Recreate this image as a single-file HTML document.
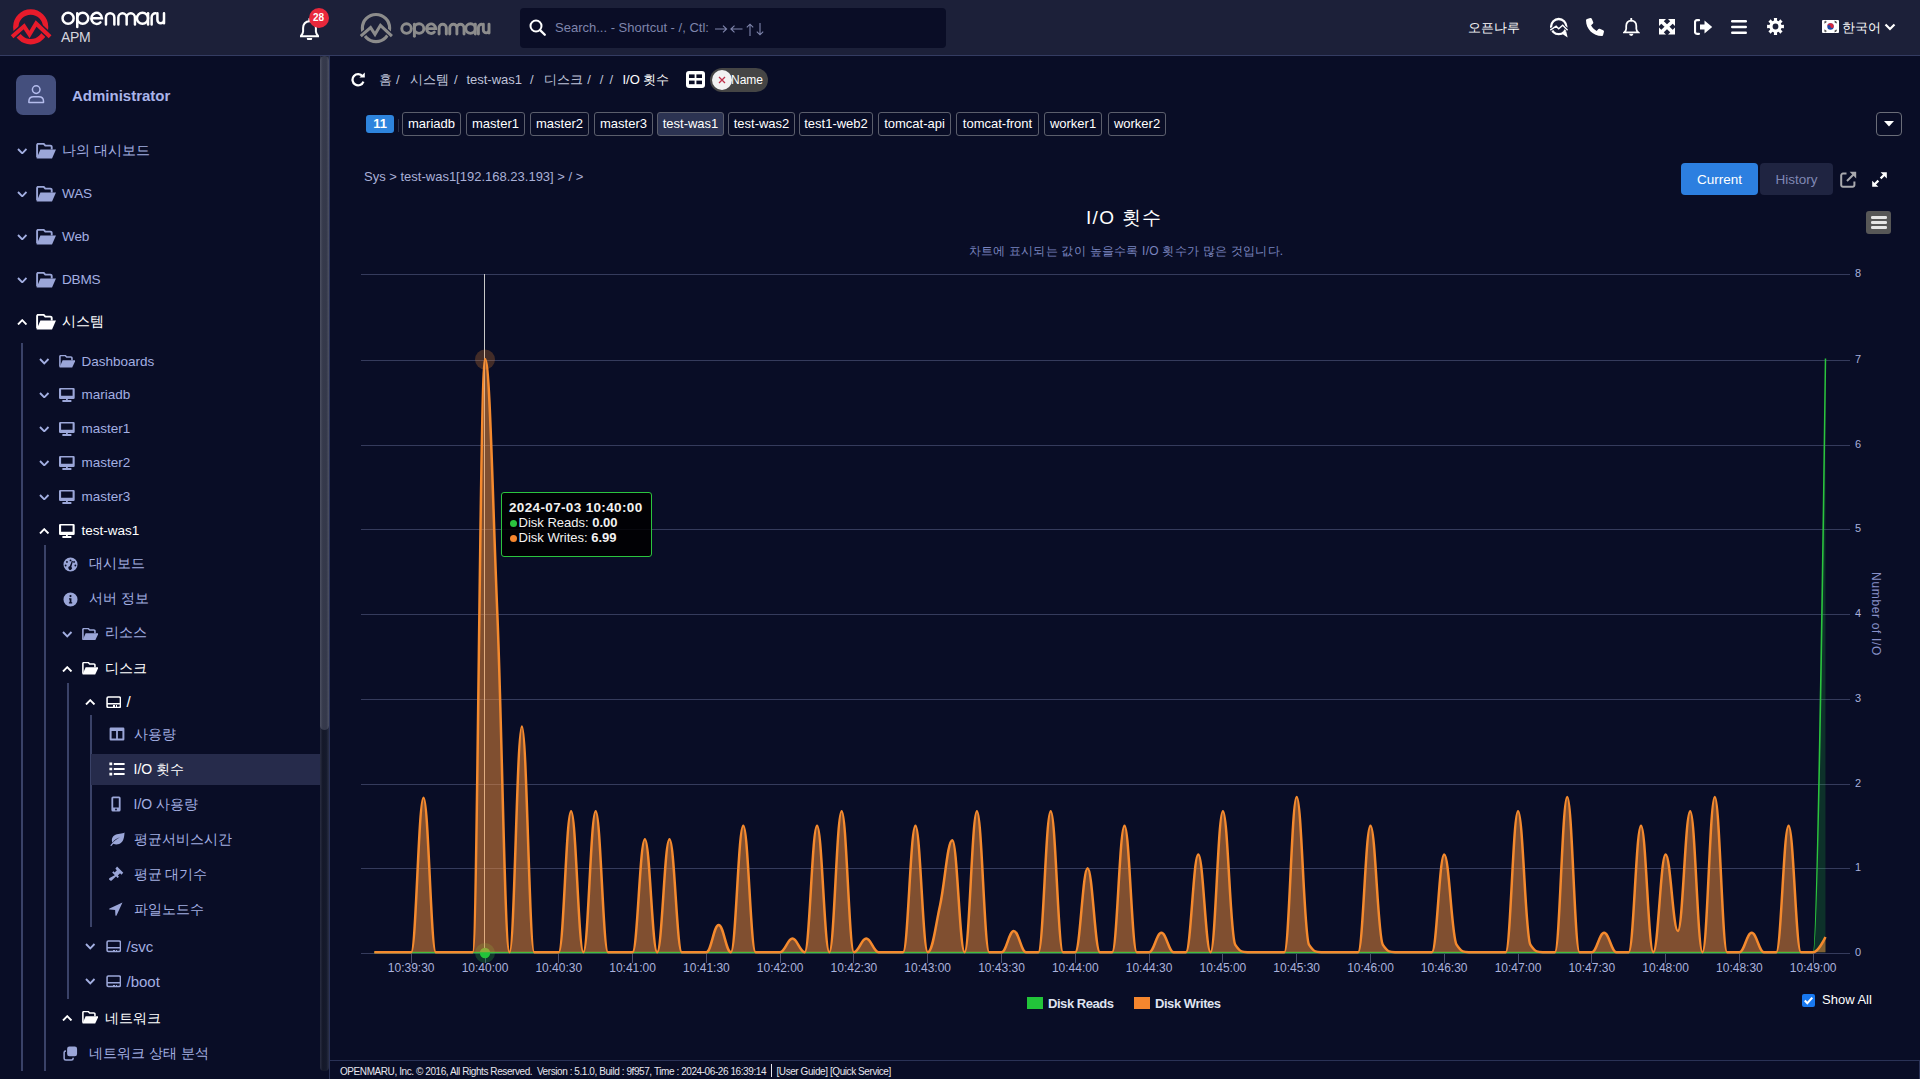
<!DOCTYPE html>
<html><head><meta charset="utf-8"><style>
*{box-sizing:border-box}
html,body{margin:0;padding:0;width:1920px;height:1079px;overflow:hidden;background:#090d26;font-family:"Liberation Sans",sans-serif}
.a{position:absolute;white-space:nowrap}
</style></head><body>
<div class="a" style="left:0;top:0;width:1920px;height:55px;background:#1c2039"></div>
<div class="a" style="left:0;top:55px;width:1920px;height:1px;background:#343c62"></div>
<svg class="chart" width="1920" height="1079" viewBox="0 0 1920 1079" style="position:absolute;left:0;top:0">
<g stroke="#353b5c" stroke-width="1"><line x1="361" x2="1850" y1="953.5" y2="953.5"/><line x1="361" x2="1850" y1="868.5" y2="868.5"/><line x1="361" x2="1850" y1="784.5" y2="784.5"/><line x1="361" x2="1850" y1="699.5" y2="699.5"/><line x1="361" x2="1850" y1="614.5" y2="614.5"/><line x1="361" x2="1850" y1="529.5" y2="529.5"/><line x1="361" x2="1850" y1="445.5" y2="445.5"/><line x1="361" x2="1850" y1="360.5" y2="360.5"/><line x1="361" x2="1850" y1="274.5" y2="274.5"/></g>
<g stroke="#4a5070" stroke-width="1"><line x1="411.5" x2="411.5" y1="954" y2="963"/><line x1="485.5" x2="485.5" y1="954" y2="963"/><line x1="558.5" x2="558.5" y1="954" y2="963"/><line x1="632.5" x2="632.5" y1="954" y2="963"/><line x1="706.5" x2="706.5" y1="954" y2="963"/><line x1="780.5" x2="780.5" y1="954" y2="963"/><line x1="853.5" x2="853.5" y1="954" y2="963"/><line x1="927.5" x2="927.5" y1="954" y2="963"/><line x1="1001.5" x2="1001.5" y1="954" y2="963"/><line x1="1075.5" x2="1075.5" y1="954" y2="963"/><line x1="1149.5" x2="1149.5" y1="954" y2="963"/><line x1="1222.5" x2="1222.5" y1="954" y2="963"/><line x1="1296.5" x2="1296.5" y1="954" y2="963"/><line x1="1370.5" x2="1370.5" y1="954" y2="963"/><line x1="1444.5" x2="1444.5" y1="954" y2="963"/><line x1="1518.5" x2="1518.5" y1="954" y2="963"/><line x1="1591.5" x2="1591.5" y1="954" y2="963"/><line x1="1665.5" x2="1665.5" y1="954" y2="963"/><line x1="1739.5" x2="1739.5" y1="954" y2="963"/><line x1="1813.5" x2="1813.5" y1="954" y2="963"/></g>
<g font-family="Liberation Sans" font-size="11" fill="#a8b0dc"><text x="1855" y="955.8">0</text><text x="1855" y="870.8">1</text><text x="1855" y="786.8">2</text><text x="1855" y="701.8">3</text><text x="1855" y="616.8">4</text><text x="1855" y="531.8">5</text><text x="1855" y="447.8">6</text><text x="1855" y="362.8">7</text><text x="1855" y="276.8">8</text></g>
<g font-family="Liberation Sans" font-size="12" fill="#aab2dc" text-anchor="middle"><text x="411.2" y="972">10:39:30</text><text x="485.0" y="972">10:40:00</text><text x="558.8" y="972">10:40:30</text><text x="632.6" y="972">10:41:00</text><text x="706.4" y="972">10:41:30</text><text x="780.2" y="972">10:42:00</text><text x="853.9" y="972">10:42:30</text><text x="927.7" y="972">10:43:00</text><text x="1001.5" y="972">10:43:30</text><text x="1075.3" y="972">10:44:00</text><text x="1149.1" y="972">10:44:30</text><text x="1222.9" y="972">10:45:00</text><text x="1296.7" y="972">10:45:30</text><text x="1370.5" y="972">10:46:00</text><text x="1444.2" y="972">10:46:30</text><text x="1518.0" y="972">10:47:00</text><text x="1591.8" y="972">10:47:30</text><text x="1665.6" y="972">10:48:00</text><text x="1739.4" y="972">10:48:30</text><text x="1813.2" y="972">10:49:00</text></g>
<text transform="translate(1872,614) rotate(90)" text-anchor="middle" font-family="Liberation Sans" font-size="12" letter-spacing="0.65" fill="#8890c8">Number of I/O</text>
<line x1="484.5" x2="484.5" y1="274" y2="953" stroke="#c8c8c8" stroke-width="1"/>
<path d="M374.32 952.60 C374.32 952.60 381.70 952.60 386.62 952.60 C391.54 952.60 393.99 952.60 398.91 952.60 C403.83 952.60 406.29 952.60 411.21 952.60 C416.13 952.60 418.59 952.60 423.51 952.60 C428.43 952.60 430.89 952.60 435.81 952.60 C440.73 952.60 443.19 952.60 448.11 952.60 C453.03 952.60 455.48 952.60 460.40 952.60 C465.32 952.60 467.78 952.60 472.70 952.60 C477.62 952.60 480.08 952.60 485.00 952.60 C489.92 952.60 492.38 952.60 497.30 952.60 C502.22 952.60 504.68 952.60 509.60 952.60 C514.52 952.60 516.97 952.60 521.89 952.60 C526.81 952.60 529.27 952.60 534.19 952.60 C539.11 952.60 541.57 952.60 546.49 952.60 C551.41 952.60 553.87 952.60 558.79 952.60 C563.71 952.60 566.17 952.60 571.09 952.60 C576.01 952.60 578.46 952.60 583.38 952.60 C588.30 952.60 590.76 952.60 595.68 952.60 C600.60 952.60 603.06 952.60 607.98 952.60 C612.90 952.60 615.36 952.60 620.28 952.60 C625.20 952.60 627.66 952.60 632.58 952.60 C637.50 952.60 639.95 952.60 644.87 952.60 C649.79 952.60 652.25 952.60 657.17 952.60 C662.09 952.60 664.55 952.60 669.47 952.60 C674.39 952.60 676.85 952.60 681.77 952.60 C686.69 952.60 689.15 952.60 694.07 952.60 C698.99 952.60 701.44 952.60 706.36 952.60 C711.28 952.60 713.74 952.60 718.66 952.60 C723.58 952.60 726.04 952.60 730.96 952.60 C735.88 952.60 738.34 952.60 743.26 952.60 C748.18 952.60 750.64 952.60 755.56 952.60 C760.48 952.60 762.93 952.60 767.85 952.60 C772.77 952.60 775.23 952.60 780.15 952.60 C785.07 952.60 787.53 952.60 792.45 952.60 C797.37 952.60 799.83 952.60 804.75 952.60 C809.67 952.60 812.13 952.60 817.05 952.60 C821.97 952.60 824.42 952.60 829.34 952.60 C834.26 952.60 836.72 952.60 841.64 952.60 C846.56 952.60 849.02 952.60 853.94 952.60 C858.86 952.60 861.32 952.60 866.24 952.60 C871.16 952.60 873.62 952.60 878.54 952.60 C883.46 952.60 885.91 952.60 890.83 952.60 C895.75 952.60 898.21 952.60 903.13 952.60 C908.05 952.60 910.51 952.60 915.43 952.60 C920.35 952.60 922.81 952.60 927.73 952.60 C932.65 952.60 935.11 952.60 940.03 952.60 C944.95 952.60 947.40 952.60 952.32 952.60 C957.24 952.60 959.70 952.60 964.62 952.60 C969.54 952.60 972.00 952.60 976.92 952.60 C981.84 952.60 984.30 952.60 989.22 952.60 C994.14 952.60 996.60 952.60 1001.52 952.60 C1006.44 952.60 1008.89 952.60 1013.81 952.60 C1018.73 952.60 1021.19 952.60 1026.11 952.60 C1031.03 952.60 1033.49 952.60 1038.41 952.60 C1043.33 952.60 1045.79 952.60 1050.71 952.60 C1055.63 952.60 1058.09 952.60 1063.01 952.60 C1067.93 952.60 1070.38 952.60 1075.30 952.60 C1080.22 952.60 1082.68 952.60 1087.60 952.60 C1092.52 952.60 1094.98 952.60 1099.90 952.60 C1104.82 952.60 1107.28 952.60 1112.20 952.60 C1117.12 952.60 1119.58 952.60 1124.50 952.60 C1129.42 952.60 1131.87 952.60 1136.79 952.60 C1141.71 952.60 1144.17 952.60 1149.09 952.60 C1154.01 952.60 1156.47 952.60 1161.39 952.60 C1166.31 952.60 1168.77 952.60 1173.69 952.60 C1178.61 952.60 1181.07 952.60 1185.99 952.60 C1190.91 952.60 1193.36 952.60 1198.28 952.60 C1203.20 952.60 1205.66 952.60 1210.58 952.60 C1215.50 952.60 1217.96 952.60 1222.88 952.60 C1227.80 952.60 1230.26 952.60 1235.18 952.60 C1240.10 952.60 1242.56 952.60 1247.48 952.60 C1252.40 952.60 1254.85 952.60 1259.77 952.60 C1264.69 952.60 1267.15 952.60 1272.07 952.60 C1276.99 952.60 1279.45 952.60 1284.37 952.60 C1289.29 952.60 1291.75 952.60 1296.67 952.60 C1301.59 952.60 1304.05 952.60 1308.97 952.60 C1313.89 952.60 1316.34 952.60 1321.26 952.60 C1326.18 952.60 1328.64 952.60 1333.56 952.60 C1338.48 952.60 1340.94 952.60 1345.86 952.60 C1350.78 952.60 1353.24 952.60 1358.16 952.60 C1363.08 952.60 1365.54 952.60 1370.46 952.60 C1375.38 952.60 1377.83 952.60 1382.75 952.60 C1387.67 952.60 1390.13 952.60 1395.05 952.60 C1399.97 952.60 1402.43 952.60 1407.35 952.60 C1412.27 952.60 1414.73 952.60 1419.65 952.60 C1424.57 952.60 1427.03 952.60 1431.95 952.60 C1436.87 952.60 1439.32 952.60 1444.24 952.60 C1449.16 952.60 1451.62 952.60 1456.54 952.60 C1461.46 952.60 1463.92 952.60 1468.84 952.60 C1473.76 952.60 1476.22 952.60 1481.14 952.60 C1486.06 952.60 1488.52 952.60 1493.44 952.60 C1498.36 952.60 1500.81 952.60 1505.73 952.60 C1510.65 952.60 1513.11 952.60 1518.03 952.60 C1522.95 952.60 1525.41 952.60 1530.33 952.60 C1535.25 952.60 1537.71 952.60 1542.63 952.60 C1547.55 952.60 1550.01 952.60 1554.93 952.60 C1559.85 952.60 1562.30 952.60 1567.22 952.60 C1572.14 952.60 1574.60 952.60 1579.52 952.60 C1584.44 952.60 1586.90 952.60 1591.82 952.60 C1596.74 952.60 1599.20 952.60 1604.12 952.60 C1609.04 952.60 1611.50 952.60 1616.42 952.60 C1621.34 952.60 1623.79 952.60 1628.71 952.60 C1633.63 952.60 1636.09 952.60 1641.01 952.60 C1645.93 952.60 1648.39 952.60 1653.31 952.60 C1658.23 952.60 1660.69 952.60 1665.61 952.60 C1670.53 952.60 1672.99 952.60 1677.91 952.60 C1682.83 952.60 1685.28 952.60 1690.20 952.60 C1695.12 952.60 1697.58 952.60 1702.50 952.60 C1707.42 952.60 1709.88 952.60 1714.80 952.60 C1719.72 952.60 1722.18 952.60 1727.10 952.60 C1732.02 952.60 1734.48 952.60 1739.40 952.60 C1744.32 952.60 1746.77 952.60 1751.69 952.60 C1756.61 952.60 1759.07 952.60 1763.99 952.60 C1768.91 952.60 1771.37 952.60 1776.29 952.60 C1781.21 952.60 1783.67 952.60 1788.59 952.60 C1793.51 952.60 1795.97 952.60 1800.89 952.60 C1805.81 952.60 1808.26 952.60 1813.18 952.60 C1818.10 952.60 1825.48 358.51 1825.48 358.51 L1825.48 952.60 L374.32 952.60 Z" fill="#1cc23a" fill-opacity="0.2"/>
<path d="M374.32 952.60 C374.32 952.60 381.70 952.60 386.62 952.60 C391.54 952.60 393.99 952.60 398.91 952.60 C403.83 952.60 406.29 952.60 411.21 952.60 C416.13 952.60 418.59 952.60 423.51 952.60 C428.43 952.60 430.89 952.60 435.81 952.60 C440.73 952.60 443.19 952.60 448.11 952.60 C453.03 952.60 455.48 952.60 460.40 952.60 C465.32 952.60 467.78 952.60 472.70 952.60 C477.62 952.60 480.08 952.60 485.00 952.60 C489.92 952.60 492.38 952.60 497.30 952.60 C502.22 952.60 504.68 952.60 509.60 952.60 C514.52 952.60 516.97 952.60 521.89 952.60 C526.81 952.60 529.27 952.60 534.19 952.60 C539.11 952.60 541.57 952.60 546.49 952.60 C551.41 952.60 553.87 952.60 558.79 952.60 C563.71 952.60 566.17 952.60 571.09 952.60 C576.01 952.60 578.46 952.60 583.38 952.60 C588.30 952.60 590.76 952.60 595.68 952.60 C600.60 952.60 603.06 952.60 607.98 952.60 C612.90 952.60 615.36 952.60 620.28 952.60 C625.20 952.60 627.66 952.60 632.58 952.60 C637.50 952.60 639.95 952.60 644.87 952.60 C649.79 952.60 652.25 952.60 657.17 952.60 C662.09 952.60 664.55 952.60 669.47 952.60 C674.39 952.60 676.85 952.60 681.77 952.60 C686.69 952.60 689.15 952.60 694.07 952.60 C698.99 952.60 701.44 952.60 706.36 952.60 C711.28 952.60 713.74 952.60 718.66 952.60 C723.58 952.60 726.04 952.60 730.96 952.60 C735.88 952.60 738.34 952.60 743.26 952.60 C748.18 952.60 750.64 952.60 755.56 952.60 C760.48 952.60 762.93 952.60 767.85 952.60 C772.77 952.60 775.23 952.60 780.15 952.60 C785.07 952.60 787.53 952.60 792.45 952.60 C797.37 952.60 799.83 952.60 804.75 952.60 C809.67 952.60 812.13 952.60 817.05 952.60 C821.97 952.60 824.42 952.60 829.34 952.60 C834.26 952.60 836.72 952.60 841.64 952.60 C846.56 952.60 849.02 952.60 853.94 952.60 C858.86 952.60 861.32 952.60 866.24 952.60 C871.16 952.60 873.62 952.60 878.54 952.60 C883.46 952.60 885.91 952.60 890.83 952.60 C895.75 952.60 898.21 952.60 903.13 952.60 C908.05 952.60 910.51 952.60 915.43 952.60 C920.35 952.60 922.81 952.60 927.73 952.60 C932.65 952.60 935.11 952.60 940.03 952.60 C944.95 952.60 947.40 952.60 952.32 952.60 C957.24 952.60 959.70 952.60 964.62 952.60 C969.54 952.60 972.00 952.60 976.92 952.60 C981.84 952.60 984.30 952.60 989.22 952.60 C994.14 952.60 996.60 952.60 1001.52 952.60 C1006.44 952.60 1008.89 952.60 1013.81 952.60 C1018.73 952.60 1021.19 952.60 1026.11 952.60 C1031.03 952.60 1033.49 952.60 1038.41 952.60 C1043.33 952.60 1045.79 952.60 1050.71 952.60 C1055.63 952.60 1058.09 952.60 1063.01 952.60 C1067.93 952.60 1070.38 952.60 1075.30 952.60 C1080.22 952.60 1082.68 952.60 1087.60 952.60 C1092.52 952.60 1094.98 952.60 1099.90 952.60 C1104.82 952.60 1107.28 952.60 1112.20 952.60 C1117.12 952.60 1119.58 952.60 1124.50 952.60 C1129.42 952.60 1131.87 952.60 1136.79 952.60 C1141.71 952.60 1144.17 952.60 1149.09 952.60 C1154.01 952.60 1156.47 952.60 1161.39 952.60 C1166.31 952.60 1168.77 952.60 1173.69 952.60 C1178.61 952.60 1181.07 952.60 1185.99 952.60 C1190.91 952.60 1193.36 952.60 1198.28 952.60 C1203.20 952.60 1205.66 952.60 1210.58 952.60 C1215.50 952.60 1217.96 952.60 1222.88 952.60 C1227.80 952.60 1230.26 952.60 1235.18 952.60 C1240.10 952.60 1242.56 952.60 1247.48 952.60 C1252.40 952.60 1254.85 952.60 1259.77 952.60 C1264.69 952.60 1267.15 952.60 1272.07 952.60 C1276.99 952.60 1279.45 952.60 1284.37 952.60 C1289.29 952.60 1291.75 952.60 1296.67 952.60 C1301.59 952.60 1304.05 952.60 1308.97 952.60 C1313.89 952.60 1316.34 952.60 1321.26 952.60 C1326.18 952.60 1328.64 952.60 1333.56 952.60 C1338.48 952.60 1340.94 952.60 1345.86 952.60 C1350.78 952.60 1353.24 952.60 1358.16 952.60 C1363.08 952.60 1365.54 952.60 1370.46 952.60 C1375.38 952.60 1377.83 952.60 1382.75 952.60 C1387.67 952.60 1390.13 952.60 1395.05 952.60 C1399.97 952.60 1402.43 952.60 1407.35 952.60 C1412.27 952.60 1414.73 952.60 1419.65 952.60 C1424.57 952.60 1427.03 952.60 1431.95 952.60 C1436.87 952.60 1439.32 952.60 1444.24 952.60 C1449.16 952.60 1451.62 952.60 1456.54 952.60 C1461.46 952.60 1463.92 952.60 1468.84 952.60 C1473.76 952.60 1476.22 952.60 1481.14 952.60 C1486.06 952.60 1488.52 952.60 1493.44 952.60 C1498.36 952.60 1500.81 952.60 1505.73 952.60 C1510.65 952.60 1513.11 952.60 1518.03 952.60 C1522.95 952.60 1525.41 952.60 1530.33 952.60 C1535.25 952.60 1537.71 952.60 1542.63 952.60 C1547.55 952.60 1550.01 952.60 1554.93 952.60 C1559.85 952.60 1562.30 952.60 1567.22 952.60 C1572.14 952.60 1574.60 952.60 1579.52 952.60 C1584.44 952.60 1586.90 952.60 1591.82 952.60 C1596.74 952.60 1599.20 952.60 1604.12 952.60 C1609.04 952.60 1611.50 952.60 1616.42 952.60 C1621.34 952.60 1623.79 952.60 1628.71 952.60 C1633.63 952.60 1636.09 952.60 1641.01 952.60 C1645.93 952.60 1648.39 952.60 1653.31 952.60 C1658.23 952.60 1660.69 952.60 1665.61 952.60 C1670.53 952.60 1672.99 952.60 1677.91 952.60 C1682.83 952.60 1685.28 952.60 1690.20 952.60 C1695.12 952.60 1697.58 952.60 1702.50 952.60 C1707.42 952.60 1709.88 952.60 1714.80 952.60 C1719.72 952.60 1722.18 952.60 1727.10 952.60 C1732.02 952.60 1734.48 952.60 1739.40 952.60 C1744.32 952.60 1746.77 952.60 1751.69 952.60 C1756.61 952.60 1759.07 952.60 1763.99 952.60 C1768.91 952.60 1771.37 952.60 1776.29 952.60 C1781.21 952.60 1783.67 952.60 1788.59 952.60 C1793.51 952.60 1795.97 952.60 1800.89 952.60 C1805.81 952.60 1808.26 952.60 1813.18 952.60 C1818.10 952.60 1825.48 358.51 1825.48 358.51" fill="none" stroke="#2bc43e" stroke-width="1.5"/>
<circle cx="485" cy="953" r="10" fill="#2bc43e" fill-opacity="0.25"/>
<circle cx="485" cy="953" r="5.2" fill="#22c43a"/>
<path d="M374.32 952.20 C374.32 952.20 381.70 952.20 386.62 952.20 C391.54 952.20 393.99 952.20 398.91 952.20 C403.83 952.20 406.29 952.20 411.21 952.20 C416.13 952.20 418.59 797.74 423.51 797.74 C428.43 797.74 430.89 952.20 435.81 952.20 C440.73 952.20 443.19 952.20 448.11 952.20 C453.03 952.20 455.48 952.20 460.40 952.20 C465.32 952.20 467.78 952.20 472.70 952.20 C477.62 952.20 480.08 358.96 485.00 358.96 C489.92 358.96 492.38 494.07 497.30 612.72 C502.22 731.37 504.68 952.20 509.60 952.20 C514.52 952.20 516.97 726.45 521.89 726.45 C526.81 726.45 529.27 952.20 534.19 952.20 C539.11 952.20 541.57 952.20 546.49 952.20 C551.41 952.20 553.87 952.20 558.79 952.20 C563.71 952.20 566.17 811.32 571.09 811.32 C576.01 811.32 578.46 952.20 583.38 952.20 C588.30 952.20 590.76 811.32 595.68 811.32 C600.60 811.32 603.06 952.20 607.98 952.20 C612.90 952.20 615.36 952.20 620.28 952.20 C625.20 952.20 627.66 952.20 632.58 952.20 C637.50 952.20 639.95 839.32 644.87 839.32 C649.79 839.32 652.25 952.20 657.17 952.20 C662.09 952.20 664.55 839.32 669.47 839.32 C674.39 839.32 676.85 952.20 681.77 952.20 C686.69 952.20 689.15 952.20 694.07 952.20 C698.99 952.20 701.44 952.20 706.36 952.20 C711.28 952.20 713.74 925.04 718.66 925.04 C723.58 925.04 726.04 952.20 730.96 952.20 C735.88 952.20 738.34 825.74 743.26 825.74 C748.18 825.74 750.64 952.20 755.56 952.20 C760.48 952.20 762.93 952.20 767.85 952.20 C772.77 952.20 775.23 952.20 780.15 952.20 C785.07 952.20 787.53 938.62 792.45 938.62 C797.37 938.62 799.83 952.20 804.75 952.20 C809.67 952.20 812.13 825.74 817.05 825.74 C821.97 825.74 824.42 952.20 829.34 952.20 C834.26 952.20 836.72 811.32 841.64 811.32 C846.56 811.32 849.02 952.20 853.94 952.20 C858.86 952.20 861.32 938.62 866.24 938.62 C871.16 938.62 873.62 952.20 878.54 952.20 C883.46 952.20 885.91 952.20 890.83 952.20 C895.75 952.20 898.21 952.20 903.13 952.20 C908.05 952.20 910.51 825.74 915.43 825.74 C920.35 825.74 922.81 952.20 927.73 952.20 C932.65 952.20 935.11 927.93 940.03 905.52 C944.95 883.12 947.40 840.17 952.32 840.17 C957.24 840.17 959.70 952.20 964.62 952.20 C969.54 952.20 972.00 811.32 976.92 811.32 C981.84 811.32 984.30 952.20 989.22 952.20 C994.14 952.20 996.60 952.20 1001.52 952.20 C1006.44 952.20 1008.89 930.98 1013.81 930.98 C1018.73 930.98 1021.19 952.20 1026.11 952.20 C1031.03 952.20 1033.49 952.20 1038.41 952.20 C1043.33 952.20 1045.79 811.32 1050.71 811.32 C1055.63 811.32 1058.09 952.20 1063.01 952.20 C1067.93 952.20 1070.38 952.20 1075.30 952.20 C1080.22 952.20 1082.68 868.18 1087.60 868.18 C1092.52 868.18 1094.98 952.20 1099.90 952.20 C1104.82 952.20 1107.28 952.20 1112.20 952.20 C1117.12 952.20 1119.58 825.74 1124.50 825.74 C1129.42 825.74 1131.87 952.20 1136.79 952.20 C1141.71 952.20 1144.17 952.20 1149.09 952.20 C1154.01 952.20 1156.47 932.68 1161.39 932.68 C1166.31 932.68 1168.77 952.20 1173.69 952.20 C1178.61 952.20 1181.07 952.20 1185.99 952.20 C1190.91 952.20 1193.36 854.60 1198.28 854.60 C1203.20 854.60 1205.66 952.20 1210.58 952.20 C1215.50 952.20 1217.96 811.32 1222.88 811.32 C1227.80 811.32 1230.26 936.92 1235.18 944.56 C1240.10 952.20 1242.56 952.20 1247.48 952.20 C1252.40 952.20 1254.85 952.20 1259.77 952.20 C1264.69 952.20 1267.15 952.20 1272.07 952.20 C1276.99 952.20 1279.45 952.20 1284.37 952.20 C1289.29 952.20 1291.75 796.89 1296.67 796.89 C1301.59 796.89 1304.05 936.92 1308.97 944.56 C1313.89 952.20 1316.34 952.20 1321.26 952.20 C1326.18 952.20 1328.64 952.20 1333.56 952.20 C1338.48 952.20 1340.94 952.20 1345.86 952.20 C1350.78 952.20 1353.24 952.20 1358.16 952.20 C1363.08 952.20 1365.54 825.74 1370.46 825.74 C1375.38 825.74 1377.83 936.92 1382.75 944.56 C1387.67 952.20 1390.13 952.20 1395.05 952.20 C1399.97 952.20 1402.43 952.20 1407.35 952.20 C1412.27 952.20 1414.73 952.20 1419.65 952.20 C1424.57 952.20 1427.03 952.20 1431.95 952.20 C1436.87 952.20 1439.32 854.60 1444.24 854.60 C1449.16 854.60 1451.62 936.92 1456.54 944.56 C1461.46 952.20 1463.92 952.20 1468.84 952.20 C1473.76 952.20 1476.22 952.20 1481.14 952.20 C1486.06 952.20 1488.52 952.20 1493.44 952.20 C1498.36 952.20 1500.81 952.20 1505.73 952.20 C1510.65 952.20 1513.11 811.32 1518.03 811.32 C1522.95 811.32 1525.41 936.92 1530.33 944.56 C1535.25 952.20 1537.71 952.20 1542.63 952.20 C1547.55 952.20 1550.01 952.20 1554.93 952.20 C1559.85 952.20 1562.30 796.89 1567.22 796.89 C1572.14 796.89 1574.60 952.20 1579.52 952.20 C1584.44 952.20 1586.90 952.20 1591.82 952.20 C1596.74 952.20 1599.20 932.68 1604.12 932.68 C1609.04 932.68 1611.50 952.20 1616.42 952.20 C1621.34 952.20 1623.79 952.20 1628.71 952.20 C1633.63 952.20 1636.09 825.74 1641.01 825.74 C1645.93 825.74 1648.39 952.20 1653.31 952.20 C1658.23 952.20 1660.69 854.60 1665.61 854.60 C1670.53 854.60 1672.99 930.98 1677.91 930.98 C1682.83 930.98 1685.28 811.32 1690.20 811.32 C1695.12 811.32 1697.58 952.20 1702.50 952.20 C1707.42 952.20 1709.88 796.89 1714.80 796.89 C1719.72 796.89 1722.18 952.20 1727.10 952.20 C1732.02 952.20 1734.48 952.20 1739.40 952.20 C1744.32 952.20 1746.77 932.68 1751.69 932.68 C1756.61 932.68 1759.07 952.20 1763.99 952.20 C1768.91 952.20 1771.37 952.20 1776.29 952.20 C1781.21 952.20 1783.67 825.74 1788.59 825.74 C1793.51 825.74 1795.97 952.20 1800.89 952.20 C1805.81 952.20 1808.26 952.20 1813.18 952.20 C1818.10 952.20 1825.48 936.92 1825.48 936.92 L1825.48 952.20 L374.32 952.20 Z" fill="#f7913a" fill-opacity="0.5"/>
<path d="M374.32 952.20 C374.32 952.20 381.70 952.20 386.62 952.20 C391.54 952.20 393.99 952.20 398.91 952.20 C403.83 952.20 406.29 952.20 411.21 952.20 C416.13 952.20 418.59 797.74 423.51 797.74 C428.43 797.74 430.89 952.20 435.81 952.20 C440.73 952.20 443.19 952.20 448.11 952.20 C453.03 952.20 455.48 952.20 460.40 952.20 C465.32 952.20 467.78 952.20 472.70 952.20 C477.62 952.20 480.08 358.96 485.00 358.96 C489.92 358.96 492.38 494.07 497.30 612.72 C502.22 731.37 504.68 952.20 509.60 952.20 C514.52 952.20 516.97 726.45 521.89 726.45 C526.81 726.45 529.27 952.20 534.19 952.20 C539.11 952.20 541.57 952.20 546.49 952.20 C551.41 952.20 553.87 952.20 558.79 952.20 C563.71 952.20 566.17 811.32 571.09 811.32 C576.01 811.32 578.46 952.20 583.38 952.20 C588.30 952.20 590.76 811.32 595.68 811.32 C600.60 811.32 603.06 952.20 607.98 952.20 C612.90 952.20 615.36 952.20 620.28 952.20 C625.20 952.20 627.66 952.20 632.58 952.20 C637.50 952.20 639.95 839.32 644.87 839.32 C649.79 839.32 652.25 952.20 657.17 952.20 C662.09 952.20 664.55 839.32 669.47 839.32 C674.39 839.32 676.85 952.20 681.77 952.20 C686.69 952.20 689.15 952.20 694.07 952.20 C698.99 952.20 701.44 952.20 706.36 952.20 C711.28 952.20 713.74 925.04 718.66 925.04 C723.58 925.04 726.04 952.20 730.96 952.20 C735.88 952.20 738.34 825.74 743.26 825.74 C748.18 825.74 750.64 952.20 755.56 952.20 C760.48 952.20 762.93 952.20 767.85 952.20 C772.77 952.20 775.23 952.20 780.15 952.20 C785.07 952.20 787.53 938.62 792.45 938.62 C797.37 938.62 799.83 952.20 804.75 952.20 C809.67 952.20 812.13 825.74 817.05 825.74 C821.97 825.74 824.42 952.20 829.34 952.20 C834.26 952.20 836.72 811.32 841.64 811.32 C846.56 811.32 849.02 952.20 853.94 952.20 C858.86 952.20 861.32 938.62 866.24 938.62 C871.16 938.62 873.62 952.20 878.54 952.20 C883.46 952.20 885.91 952.20 890.83 952.20 C895.75 952.20 898.21 952.20 903.13 952.20 C908.05 952.20 910.51 825.74 915.43 825.74 C920.35 825.74 922.81 952.20 927.73 952.20 C932.65 952.20 935.11 927.93 940.03 905.52 C944.95 883.12 947.40 840.17 952.32 840.17 C957.24 840.17 959.70 952.20 964.62 952.20 C969.54 952.20 972.00 811.32 976.92 811.32 C981.84 811.32 984.30 952.20 989.22 952.20 C994.14 952.20 996.60 952.20 1001.52 952.20 C1006.44 952.20 1008.89 930.98 1013.81 930.98 C1018.73 930.98 1021.19 952.20 1026.11 952.20 C1031.03 952.20 1033.49 952.20 1038.41 952.20 C1043.33 952.20 1045.79 811.32 1050.71 811.32 C1055.63 811.32 1058.09 952.20 1063.01 952.20 C1067.93 952.20 1070.38 952.20 1075.30 952.20 C1080.22 952.20 1082.68 868.18 1087.60 868.18 C1092.52 868.18 1094.98 952.20 1099.90 952.20 C1104.82 952.20 1107.28 952.20 1112.20 952.20 C1117.12 952.20 1119.58 825.74 1124.50 825.74 C1129.42 825.74 1131.87 952.20 1136.79 952.20 C1141.71 952.20 1144.17 952.20 1149.09 952.20 C1154.01 952.20 1156.47 932.68 1161.39 932.68 C1166.31 932.68 1168.77 952.20 1173.69 952.20 C1178.61 952.20 1181.07 952.20 1185.99 952.20 C1190.91 952.20 1193.36 854.60 1198.28 854.60 C1203.20 854.60 1205.66 952.20 1210.58 952.20 C1215.50 952.20 1217.96 811.32 1222.88 811.32 C1227.80 811.32 1230.26 936.92 1235.18 944.56 C1240.10 952.20 1242.56 952.20 1247.48 952.20 C1252.40 952.20 1254.85 952.20 1259.77 952.20 C1264.69 952.20 1267.15 952.20 1272.07 952.20 C1276.99 952.20 1279.45 952.20 1284.37 952.20 C1289.29 952.20 1291.75 796.89 1296.67 796.89 C1301.59 796.89 1304.05 936.92 1308.97 944.56 C1313.89 952.20 1316.34 952.20 1321.26 952.20 C1326.18 952.20 1328.64 952.20 1333.56 952.20 C1338.48 952.20 1340.94 952.20 1345.86 952.20 C1350.78 952.20 1353.24 952.20 1358.16 952.20 C1363.08 952.20 1365.54 825.74 1370.46 825.74 C1375.38 825.74 1377.83 936.92 1382.75 944.56 C1387.67 952.20 1390.13 952.20 1395.05 952.20 C1399.97 952.20 1402.43 952.20 1407.35 952.20 C1412.27 952.20 1414.73 952.20 1419.65 952.20 C1424.57 952.20 1427.03 952.20 1431.95 952.20 C1436.87 952.20 1439.32 854.60 1444.24 854.60 C1449.16 854.60 1451.62 936.92 1456.54 944.56 C1461.46 952.20 1463.92 952.20 1468.84 952.20 C1473.76 952.20 1476.22 952.20 1481.14 952.20 C1486.06 952.20 1488.52 952.20 1493.44 952.20 C1498.36 952.20 1500.81 952.20 1505.73 952.20 C1510.65 952.20 1513.11 811.32 1518.03 811.32 C1522.95 811.32 1525.41 936.92 1530.33 944.56 C1535.25 952.20 1537.71 952.20 1542.63 952.20 C1547.55 952.20 1550.01 952.20 1554.93 952.20 C1559.85 952.20 1562.30 796.89 1567.22 796.89 C1572.14 796.89 1574.60 952.20 1579.52 952.20 C1584.44 952.20 1586.90 952.20 1591.82 952.20 C1596.74 952.20 1599.20 932.68 1604.12 932.68 C1609.04 932.68 1611.50 952.20 1616.42 952.20 C1621.34 952.20 1623.79 952.20 1628.71 952.20 C1633.63 952.20 1636.09 825.74 1641.01 825.74 C1645.93 825.74 1648.39 952.20 1653.31 952.20 C1658.23 952.20 1660.69 854.60 1665.61 854.60 C1670.53 854.60 1672.99 930.98 1677.91 930.98 C1682.83 930.98 1685.28 811.32 1690.20 811.32 C1695.12 811.32 1697.58 952.20 1702.50 952.20 C1707.42 952.20 1709.88 796.89 1714.80 796.89 C1719.72 796.89 1722.18 952.20 1727.10 952.20 C1732.02 952.20 1734.48 952.20 1739.40 952.20 C1744.32 952.20 1746.77 932.68 1751.69 932.68 C1756.61 932.68 1759.07 952.20 1763.99 952.20 C1768.91 952.20 1771.37 952.20 1776.29 952.20 C1781.21 952.20 1783.67 825.74 1788.59 825.74 C1793.51 825.74 1795.97 952.20 1800.89 952.20 C1805.81 952.20 1808.26 952.20 1813.18 952.20 C1818.10 952.20 1825.48 936.92 1825.48 936.92" fill="none" stroke="#f58a2e" stroke-width="2.5" stroke-linejoin="round"/>
<circle cx="485" cy="359.5" r="10" fill="#f58a2e" fill-opacity="0.25"/>
</svg>
<svg class="a" style="left:0;top:0" width="60" height="55" viewBox="0 0 60 55"><g transform="translate(30.7,26.9)"><circle cx="0" cy="0" r="14.9" fill="none" stroke="#e81b2b" stroke-width="5.4"/>
<g transform="scale(1.0)"><path d="M-19.5 10.6 L-6.6 -0.6 L-1.2 7.6 L5.4 -3.4 L20 10.4" fill="none" stroke="#1c2039" stroke-width="7.0" stroke-linejoin="bevel"/>
<path d="M-18.6 9.8 L-6.6 -0.6 L-1.2 7.6 L5.4 -3.4 L19.4 9.8" fill="none" stroke="#e81b2b" stroke-width="4.0" stroke-linejoin="miter" stroke-miterlimit="2"/></g></g></svg>
<svg class="a" style="left:0;top:0" width="180" height="30" viewBox="0 0 180 30"><g transform="translate(61.2,11.9)"><g fill="none" stroke="#ffffff" stroke-width="2.5" stroke-linecap="round"><circle cx="6.9" cy="6.4" r="5.55"/><path d="M16.05 1.4 V15.2"/><circle cx="21.5" cy="6.4" r="5.55"/><path d="M30.15 6.4 H40.75 A5.3 5.55 0 1 0 39.2 10.4"/><path d="M44.75 12.6 V5.55 A4.2 4.2 0 0 1 53.15 5.55 V12.6"/><path d="M57.15 12.6 V5.55 A4.15 4.15 0 0 1 65.45 5.55 V12.6 M65.45 5.55 A4.15 4.15 0 0 1 73.75 5.55 V12.6"/><circle cx="81.3" cy="6.4" r="5.55"/><path d="M86.85 1.4 V12.6"/><path d="M90.45 12.6 V5.3 A3.9 3.9 0 0 1 94.4 1.4"/><path d="M96.2 1.4 V8.1 A3.3 3.3 0 0 0 102.8 8.1 V1.4 M102.8 8 V11.45"/></g></g></svg>
<div class="a" style="left:61px;top:28.5px;font-size:14px;line-height:16px;color:#d6d6de;letter-spacing:-0.3px">APM</div>
<svg class="a" style="left:299.5px;top:17.5px" width="19" height="22" viewBox="1.5 0 19 22">
<path d="M11 3.2 C6.8 3.2 4.6 6.4 4.6 10 V13.6 C4.6 15.4 3.4 17 2.2 18.3 H19.8 C18.6 17 17.4 15.4 17.4 13.6 V10 C17.4 6.4 15.2 3.2 11 3.2 Z" fill="none" stroke="#fff" stroke-width="2"/>
<path d="M11 1 V3" stroke="#fff" stroke-width="2.2" stroke-linecap="round"/>
<path d="M8.3 20 A2.7 2.7 0 0 0 13.7 20 Z" fill="#fff"/></svg>
<div class="a" style="left:308.5px;top:7.5px;width:20px;height:20px;border-radius:50%;background:#e8283c;color:#fff;font-size:10px;font-weight:bold;line-height:20px;text-align:center">28</div>
<svg class="a" style="left:350px;top:0" width="150" height="55" viewBox="0 0 150 55"><g transform="translate(26,28.1)"><circle cx="0" cy="0" r="13.6" fill="none" stroke="#8c8c8c" stroke-width="3.2"/>
<g transform="scale(0.82)"><path d="M-19.5 10.6 L-6.6 -0.6 L-1.2 7.6 L5.4 -3.4 L20 10.4" fill="none" stroke="#1c2039" stroke-width="6.658536585365853" stroke-linejoin="bevel"/>
<path d="M-18.6 9.8 L-6.6 -0.6 L-1.2 7.6 L5.4 -3.4 L19.4 9.8" fill="none" stroke="#8c8c8c" stroke-width="3.658536585365854" stroke-linejoin="miter" stroke-miterlimit="2"/></g></g><g transform="translate(50.6,23.1) scale(0.86)"><g fill="none" stroke="#8c8c8c" stroke-width="3.4" stroke-linecap="round"><circle cx="6.9" cy="6.4" r="5.55"/><path d="M16.05 1.4 V15.2"/><circle cx="21.5" cy="6.4" r="5.55"/><path d="M30.15 6.4 H40.75 A5.3 5.55 0 1 0 39.2 10.4"/><path d="M44.75 12.6 V5.55 A4.2 4.2 0 0 1 53.15 5.55 V12.6"/><path d="M57.15 12.6 V5.55 A4.15 4.15 0 0 1 65.45 5.55 V12.6 M65.45 5.55 A4.15 4.15 0 0 1 73.75 5.55 V12.6"/><circle cx="81.3" cy="6.4" r="5.55"/><path d="M86.85 1.4 V12.6"/><path d="M90.45 12.6 V5.3 A3.9 3.9 0 0 1 94.4 1.4"/><path d="M96.2 1.4 V8.1 A3.3 3.3 0 0 0 102.8 8.1 V1.4 M102.8 8 V11.45"/></g></g></svg>
<div class="a" style="left:520px;top:8px;width:426px;height:40px;border-radius:4px;background:#0a0d26"></div>
<svg class="a" style="left:528px;top:18px" width="20" height="20" viewBox="0 0 20 20"><circle cx="8" cy="8" r="5.5" fill="none" stroke="#fff" stroke-width="2"/><path d="M12.1 12.1 L16.8 16.8" stroke="#fff" stroke-width="2.3" stroke-linecap="round"/></svg>
<div class="a" style="left:555px;top:20px;font-size:13px;line-height:16px;color:#7f85ac">Search... - Shortcut - /, Ctl:</div>
<svg class="a" style="left:714px;top:22px" width="50" height="15" viewBox="0 0 50 15"><g fill="none" stroke="#7f85ac" stroke-width="1.1"><path d="M1 7 H12.5 M9 3.6 L12.6 7 L9 10.4"/><path d="M17 7 H28.5 M20.5 3.6 L16.9 7 L20.5 10.4"/><path d="M36 2.2 V14 M32.8 5.4 L36 2.2 L39.2 5.4"/><path d="M46 1 V12.8 M42.8 9.6 L46 12.8 L49.2 9.6"/></g></svg>
<div class="a" style="left:1468px;top:20px;font-size:13px;line-height:16px;color:#fff">오픈나루</div>
<svg class="a" style="left:1548px;top:16px" width="22" height="22" viewBox="0 0 22 22"><circle cx="10.7" cy="10.6" r="7.6" fill="none" stroke="#fff" stroke-width="2.3"/><path d="M13.4 17.2 L19.6 21.4 L18.2 15.2 Z" fill="#fff"/><path d="M1.8 14.6 L8.1 10.2 L10.7 12.8 L14.7 9.3 L20 14.4" fill="none" stroke="#1c2039" stroke-width="3"/><path d="M2.3 14.2 L8.1 10.2 L10.7 12.8 L14.7 9.3 L19.6 14.2" fill="none" stroke="#fff" stroke-width="1.4"/></svg>
<svg class="a" style="left:1586px;top:18px" width="18" height="18" viewBox="0 0 512 512"><path fill="#fff" d="M164.9 24.6c-7.7-18.6-28-28.5-47.4-23.2l-88 24C12.1 30.2 0 46 0 64C0 311.4 200.6 512 448 512c18 0 33.8-12.1 38.6-29.5l24-88c5.300-19.400-4.600-39.700-23.200-47.400l-96-40c-16.300-6.800-35.200-2.100-46.300 11.600L304.700 368C234.300 334.700 177.300 277.700 144 207.300L193.300 167c13.700-11.200 18.400-30 11.600-46.300l-40-96z"/></svg>
<svg class="a" style="left:1623px;top:17.5px" width="16.5" height="18.5" viewBox="0.75 0 16.5 19"><path d="M9 2.6 C5.6 2.6 3.8 5.2 3.8 8.2 V11 C3.8 12.6 2.9 13.8 1.8 14.8 H16.2 C15.1 13.8 14.2 12.6 14.2 11 V8.2 C14.2 5.2 12.4 2.6 9 2.6 Z" fill="none" stroke="#fff" stroke-width="1.8"/><path d="M9 0.8 V2.6" stroke="#fff" stroke-width="2" stroke-linecap="round"/><path d="M6.8 16.2 A2.2 2.2 0 0 0 11.2 16.2 Z" fill="#fff"/></svg>
<svg class="a" style="left:1659px;top:19px" width="16" height="15.5" viewBox="0 0 16 15.5"><g fill="#fff"><path d="M0 0 H7 L0 7 Z M16 0 H9 L16 7 Z M0 15.5 H7 L0 8.5 Z M16 15.5 H9 L16 8.5 Z"/></g><path d="M2 2 L14 13.5 M14 2 L2 13.5" stroke="#fff" stroke-width="3.6"/></svg>
<svg class="a" style="left:1694px;top:19px" width="19" height="16" viewBox="0 0 19 16"><path d="M5 1.2 H3 A2 2 0 0 0 1 3.2 V12.8 A2 2 0 0 0 3 14.8 H5" fill="none" stroke="#fff" stroke-width="2.2" stroke-linecap="round"/><path fill="#fff" d="M6 5.6 H10.5 V1.6 L18.2 8 L10.5 14.4 V10.4 H6 Z"/></svg>
<svg class="a" style="left:1731px;top:20px" width="16" height="14" viewBox="0 0 16 14"><rect x="0" y="0" width="16" height="2.4" rx="1.2" fill="#fff"/><rect x="0" y="5.8" width="16" height="2.4" rx="1.2" fill="#fff"/><rect x="0" y="11.6" width="16" height="2.4" rx="1.2" fill="#fff"/></svg>
<svg class="a" style="left:1767px;top:18px" width="17" height="17" viewBox="0 0 17 17"><path fill="#fff" fill-rule="evenodd" d="M16.94 6.86 L16.94 10.14 L14.53 9.95 L13.79 11.74 L15.63 13.31 L13.31 15.63 L11.74 13.79 L9.95 14.53 L10.14 16.94 L6.86 16.94 L7.05 14.53 L5.26 13.79 L3.69 15.63 L1.37 13.31 L3.21 11.74 L2.47 9.95 L0.06 10.14 L0.06 6.86 L2.47 7.05 L3.21 5.26 L1.37 3.69 L3.69 1.37 L5.26 3.21 L7.05 2.47 L6.86 0.06 L10.14 0.06 L9.95 2.47 L11.74 3.21 L13.31 1.37 L15.63 3.69 L13.79 5.26 L14.53 7.05 Z M8.5 5.6 A2.9 2.9 0 1 0 8.5 11.4 A2.9 2.9 0 1 0 8.5 5.6 Z"/></svg>
<svg class="a" style="left:1822px;top:20px" width="17" height="13" viewBox="0 0 17 13"><rect width="17" height="13" fill="#fff" rx="1"/><circle cx="8.5" cy="6.5" r="3.2" fill="#1f4aa8"/><path d="M5.3 6.5 A3.2 3.2 0 0 1 11.7 6.5 A1.6 1.6 0 0 1 8.5 6.5 A1.6 1.6 0 0 0 5.3 6.5Z" fill="#d8263a"/><g stroke="#222" stroke-width="0.8"><path d="M2 2.4 L4 1 M2.6 3.2 L4.6 1.8 M12.8 1 L15 2.6 M12.4 1.8 L14.4 3.2 M2 10.6 L4 12 M2.6 9.8 L4.6 11.2 M12.8 12 L15 10.4 M12.4 11.2 L14.4 9.8"/></g></svg>
<div class="a" style="left:1842px;top:20px;font-size:13px;line-height:16px;color:#fff">한국어</div>
<svg class="a" style="left:1884px;top:22px" width="12" height="10" viewBox="0 0 12 10"><path d="M1.5 2.5 L6 7 L10.5 2.5" fill="none" stroke="#fff" stroke-width="2.2"/></svg>
<div class="a" style="left:320px;top:56px;width:9px;height:1015px;border-radius:0 0 4px 4px;background:linear-gradient(90deg,#2a2e42 0%,#141829 30%,#151a2c 70%,#2a2f45 100%)"></div>
<div class="a" style="left:320px;top:56px;width:9px;height:674px;border-radius:4.5px;background:linear-gradient(90deg,#4d5162 0%,#363a4c 30%,#34384a 70%,#4d5163 100%)"></div>
<div class="a" style="left:329px;top:56px;width:1px;height:1023px;background:#2a3256"></div>
<div class="a" style="left:16px;top:75px;width:40px;height:40px;border-radius:7px;background:#444f7d"></div>
<svg class="a" style="left:26px;top:84px" width="20" height="22" viewBox="0 0 20 22"><circle cx="10.2" cy="5.6" r="3.8" fill="none" stroke="#b4bcec" stroke-width="1.5"/><path d="M2.9 18.6 V17.2 C2.9 14.4 5 12.8 7.6 12.8 H12.8 C15.4 12.8 17.5 14.4 17.5 17.2 V18.6 Z" fill="none" stroke="#b4bcec" stroke-width="1.5" stroke-linejoin="round"/></svg>
<div class="a" style="left:72px;top:85.5px;font-size:15px;line-height:20px;color:#a9b4ea;font-weight:bold;letter-spacing:0px">Administrator</div>
<div class="a" style="left:21px;top:343px;width:2px;height:728px;background:#3a4268"></div>
<div class="a" style="left:44px;top:545px;width:2px;height:526px;background:#3a4268"></div>
<div class="a" style="left:66.5px;top:683px;width:2px;height:316px;background:#3a4268"></div>
<div class="a" style="left:89.5px;top:715px;width:2px;height:212px;background:#3a4268"></div>
<div class="a" style="left:91px;top:754px;width:229px;height:31px;background:#262b4b"></div>
<svg class="a" style="left:16.5px;top:147.5px" width="10.5" height="6.5" viewBox="0 0 10.5 6.5"><path d="M1 1 L5.25 5.3 L9.5 1" fill="none" stroke="#a3afe2" stroke-width="1.9"/></svg>
<svg class="a" style="left:36px;top:143.0px" width="20" height="15.5" viewBox="0 0 20 15.5" preserveAspectRatio="none"><path d="M1.1 14.6 V2 A1.3 1.3 0 0 1 2.4 0.7 H7.5 L9.3 2.6 H14.4 A1.3 1.3 0 0 1 15.7 3.9 V6.6" fill="none" stroke="#9ba6d8" stroke-width="1.9" stroke-linejoin="round"/><path d="M4.4 6.6 H20 L16 15.4 H0.6 Z" fill="#9ba6d8"/></svg>
<div class="a" style="left:62px;top:140.8px;font-size:13.5px;line-height:20px;color:#a3afe2;font-weight:normal;letter-spacing:0px">나의 대시보드</div>
<svg class="a" style="left:16.5px;top:190.5px" width="10.5" height="6.5" viewBox="0 0 10.5 6.5"><path d="M1 1 L5.25 5.3 L9.5 1" fill="none" stroke="#a3afe2" stroke-width="1.9"/></svg>
<svg class="a" style="left:36px;top:186.0px" width="20" height="15.5" viewBox="0 0 20 15.5" preserveAspectRatio="none"><path d="M1.1 14.6 V2 A1.3 1.3 0 0 1 2.4 0.7 H7.5 L9.3 2.6 H14.4 A1.3 1.3 0 0 1 15.7 3.9 V6.6" fill="none" stroke="#9ba6d8" stroke-width="1.9" stroke-linejoin="round"/><path d="M4.4 6.6 H20 L16 15.4 H0.6 Z" fill="#9ba6d8"/></svg>
<div class="a" style="left:62px;top:183.8px;font-size:13.6px;line-height:20px;color:#a3afe2;font-weight:normal;letter-spacing:-0.2px">WAS</div>
<svg class="a" style="left:16.5px;top:233.5px" width="10.5" height="6.5" viewBox="0 0 10.5 6.5"><path d="M1 1 L5.25 5.3 L9.5 1" fill="none" stroke="#a3afe2" stroke-width="1.9"/></svg>
<svg class="a" style="left:36px;top:229.0px" width="20" height="15.5" viewBox="0 0 20 15.5" preserveAspectRatio="none"><path d="M1.1 14.6 V2 A1.3 1.3 0 0 1 2.4 0.7 H7.5 L9.3 2.6 H14.4 A1.3 1.3 0 0 1 15.7 3.9 V6.6" fill="none" stroke="#9ba6d8" stroke-width="1.9" stroke-linejoin="round"/><path d="M4.4 6.6 H20 L16 15.4 H0.6 Z" fill="#9ba6d8"/></svg>
<div class="a" style="left:62px;top:226.8px;font-size:13.6px;line-height:20px;color:#a3afe2;font-weight:normal;letter-spacing:-0.2px">Web</div>
<svg class="a" style="left:16.5px;top:276.5px" width="10.5" height="6.5" viewBox="0 0 10.5 6.5"><path d="M1 1 L5.25 5.3 L9.5 1" fill="none" stroke="#a3afe2" stroke-width="1.9"/></svg>
<svg class="a" style="left:36px;top:272.0px" width="20" height="15.5" viewBox="0 0 20 15.5" preserveAspectRatio="none"><path d="M1.1 14.6 V2 A1.3 1.3 0 0 1 2.4 0.7 H7.5 L9.3 2.6 H14.4 A1.3 1.3 0 0 1 15.7 3.9 V6.6" fill="none" stroke="#9ba6d8" stroke-width="1.9" stroke-linejoin="round"/><path d="M4.4 6.6 H20 L16 15.4 H0.6 Z" fill="#9ba6d8"/></svg>
<div class="a" style="left:62px;top:269.8px;font-size:13.6px;line-height:20px;color:#a3afe2;font-weight:normal;letter-spacing:-0.2px">DBMS</div>
<svg class="a" style="left:16.5px;top:318.7px" width="10.5" height="6.5" viewBox="0 0 10.5 6.5"><path d="M1 5.5 L5.25 1.2 L9.5 5.5" fill="none" stroke="#ffffff" stroke-width="1.9"/></svg>
<svg class="a" style="left:36px;top:314.2px" width="20" height="15.5" viewBox="0 0 20 15.5" preserveAspectRatio="none"><path d="M1.1 14.6 V2 A1.3 1.3 0 0 1 2.4 0.7 H7.5 L9.3 2.6 H14.4 A1.3 1.3 0 0 1 15.7 3.9 V6.6" fill="none" stroke="#ffffff" stroke-width="1.9" stroke-linejoin="round"/><path d="M4.4 6.6 H20 L16 15.4 H0.6 Z" fill="#ffffff"/></svg>
<div class="a" style="left:62px;top:312.0px;font-size:13.5px;line-height:20px;color:#ffffff;font-weight:normal;letter-spacing:0px">시스템</div>
<svg class="a" style="left:39.2px;top:358.2px" width="10.5" height="6.5" viewBox="0 0 10.5 6.5"><path d="M1 1 L5.25 5.3 L9.5 1" fill="none" stroke="#a3afe2" stroke-width="1.9"/></svg>
<svg class="a" style="left:58.8px;top:355.2px" width="16.5" height="12.5" viewBox="0 0 20 15.5" preserveAspectRatio="none"><path d="M1.1 14.6 V2 A1.3 1.3 0 0 1 2.4 0.7 H7.5 L9.3 2.6 H14.4 A1.3 1.3 0 0 1 15.7 3.9 V6.6" fill="none" stroke="#9ba6d8" stroke-width="1.9" stroke-linejoin="round"/><path d="M4.4 6.6 H20 L16 15.4 H0.6 Z" fill="#9ba6d8"/></svg>
<div class="a" style="left:81.5px;top:351.5px;font-size:13.5px;line-height:20px;color:#a3afe2;font-weight:normal;letter-spacing:0px">Dashboards</div>
<svg class="a" style="left:39.2px;top:391.9px" width="10.5" height="6.5" viewBox="0 0 10.5 6.5"><path d="M1 1 L5.25 5.3 L9.5 1" fill="none" stroke="#a3afe2" stroke-width="1.9"/></svg>
<svg class="a" style="left:59.3px;top:387.9px" width="15.7" height="14" viewBox="0 0 15.7 14" preserveAspectRatio="none"><path fill="#9ba6d8" d="M1.2 0 H14.5 A1.2 1.2 0 0 1 15.7 1.2 V9.7 A1.2 1.2 0 0 1 14.5 10.9 H1.2 A1.2 1.2 0 0 1 0 9.7 V1.2 A1.2 1.2 0 0 1 1.2 0 Z M2.1 1.5 V7.7 H13.6 V1.5 Z M7 10.8 H8.8 V12.2 H7Z M3.4 12.1 H12.4 V13.9 H3.4Z"/></svg>
<div class="a" style="left:81.5px;top:385.2px;font-size:13.5px;line-height:20px;color:#a3afe2;font-weight:normal;letter-spacing:0px">mariadb</div>
<svg class="a" style="left:39.2px;top:425.9px" width="10.5" height="6.5" viewBox="0 0 10.5 6.5"><path d="M1 1 L5.25 5.3 L9.5 1" fill="none" stroke="#a3afe2" stroke-width="1.9"/></svg>
<svg class="a" style="left:59.3px;top:421.9px" width="15.7" height="14" viewBox="0 0 15.7 14" preserveAspectRatio="none"><path fill="#9ba6d8" d="M1.2 0 H14.5 A1.2 1.2 0 0 1 15.7 1.2 V9.7 A1.2 1.2 0 0 1 14.5 10.9 H1.2 A1.2 1.2 0 0 1 0 9.7 V1.2 A1.2 1.2 0 0 1 1.2 0 Z M2.1 1.5 V7.7 H13.6 V1.5 Z M7 10.8 H8.8 V12.2 H7Z M3.4 12.1 H12.4 V13.9 H3.4Z"/></svg>
<div class="a" style="left:81.5px;top:419.2px;font-size:13.5px;line-height:20px;color:#a3afe2;font-weight:normal;letter-spacing:0px">master1</div>
<svg class="a" style="left:39.2px;top:459.9px" width="10.5" height="6.5" viewBox="0 0 10.5 6.5"><path d="M1 1 L5.25 5.3 L9.5 1" fill="none" stroke="#a3afe2" stroke-width="1.9"/></svg>
<svg class="a" style="left:59.3px;top:455.9px" width="15.7" height="14" viewBox="0 0 15.7 14" preserveAspectRatio="none"><path fill="#9ba6d8" d="M1.2 0 H14.5 A1.2 1.2 0 0 1 15.7 1.2 V9.7 A1.2 1.2 0 0 1 14.5 10.9 H1.2 A1.2 1.2 0 0 1 0 9.7 V1.2 A1.2 1.2 0 0 1 1.2 0 Z M2.1 1.5 V7.7 H13.6 V1.5 Z M7 10.8 H8.8 V12.2 H7Z M3.4 12.1 H12.4 V13.9 H3.4Z"/></svg>
<div class="a" style="left:81.5px;top:453.2px;font-size:13.5px;line-height:20px;color:#a3afe2;font-weight:normal;letter-spacing:0px">master2</div>
<svg class="a" style="left:39.2px;top:493.9px" width="10.5" height="6.5" viewBox="0 0 10.5 6.5"><path d="M1 1 L5.25 5.3 L9.5 1" fill="none" stroke="#a3afe2" stroke-width="1.9"/></svg>
<svg class="a" style="left:59.3px;top:489.9px" width="15.7" height="14" viewBox="0 0 15.7 14" preserveAspectRatio="none"><path fill="#9ba6d8" d="M1.2 0 H14.5 A1.2 1.2 0 0 1 15.7 1.2 V9.7 A1.2 1.2 0 0 1 14.5 10.9 H1.2 A1.2 1.2 0 0 1 0 9.7 V1.2 A1.2 1.2 0 0 1 1.2 0 Z M2.1 1.5 V7.7 H13.6 V1.5 Z M7 10.8 H8.8 V12.2 H7Z M3.4 12.1 H12.4 V13.9 H3.4Z"/></svg>
<div class="a" style="left:81.5px;top:487.2px;font-size:13.5px;line-height:20px;color:#a3afe2;font-weight:normal;letter-spacing:0px">master3</div>
<svg class="a" style="left:39.2px;top:527.9000000000001px" width="10.5" height="6.5" viewBox="0 0 10.5 6.5"><path d="M1 5.5 L5.25 1.2 L9.5 5.5" fill="none" stroke="#ffffff" stroke-width="1.9"/></svg>
<svg class="a" style="left:59.3px;top:523.9000000000001px" width="15.7" height="14" viewBox="0 0 15.7 14" preserveAspectRatio="none"><path fill="#ffffff" d="M1.2 0 H14.5 A1.2 1.2 0 0 1 15.7 1.2 V9.7 A1.2 1.2 0 0 1 14.5 10.9 H1.2 A1.2 1.2 0 0 1 0 9.7 V1.2 A1.2 1.2 0 0 1 1.2 0 Z M2.1 1.5 V7.7 H13.6 V1.5 Z M7 10.8 H8.8 V12.2 H7Z M3.4 12.1 H12.4 V13.9 H3.4Z"/></svg>
<div class="a" style="left:81.5px;top:521.2px;font-size:13.5px;line-height:20px;color:#ffffff;font-weight:normal;letter-spacing:0px">test-was1</div>
<svg class="a" style="left:63px;top:556.7px" width="15" height="15" viewBox="0 0 16 16" preserveAspectRatio="none"><path fill="#9ba6d8" d="M8 0.5 A7.5 7.5 0 1 0 8 15.5 A7.5 7.5 0 1 0 8 0.5 Z M8 2.6 A1 1 0 1 1 8 4.6 A1 1 0 1 1 8 2.6 Z M4.2 4.2 A1 1 0 1 1 4.2 6.2 A1 1 0 1 1 4.2 4.2Z M11.8 4.2 A1 1 0 1 1 11.8 6.2 A1 1 0 1 1 11.8 4.2Z M2.8 8 A1 1 0 1 1 2.8 10 A1 1 0 1 1 2.8 8Z M13.2 8 A1 1 0 1 1 13.2 10 A1 1 0 1 1 13.2 8Z M10.6 4.4 L8.9 10.3 A1.9 1.9 0 1 1 7.2 9.9 L9.5 4.1 Z"/></svg>
<div class="a" style="left:89px;top:552.5px;font-size:14px;line-height:20px;color:#a3afe2;font-weight:normal;letter-spacing:0px">대시보드</div>
<svg class="a" style="left:63px;top:591.5px" width="15" height="15" viewBox="0 0 16 16" preserveAspectRatio="none"><path fill="#9ba6d8" d="M8 0.5 A7.5 7.5 0 1 0 8 15.5 A7.5 7.5 0 1 0 8 0.5 Z M8 3.2 A1.15 1.15 0 1 1 8 5.5 A1.15 1.15 0 1 1 8 3.2 Z M6.4 6.6 H9 V10.9 H9.8 V12.3 H6.3 V10.9 H7.1 V8 H6.4 Z"/></svg>
<div class="a" style="left:89px;top:587.6px;font-size:14px;line-height:20px;color:#a3afe2;font-weight:normal;letter-spacing:0px">서버 정보</div>
<svg class="a" style="left:62px;top:631px" width="10.5" height="6.5" viewBox="0 0 10.5 6.5"><path d="M1 1 L5.25 5.3 L9.5 1" fill="none" stroke="#a3afe2" stroke-width="1.9"/></svg>
<svg class="a" style="left:81.5px;top:627.5px" width="16.5" height="12.5" viewBox="0 0 20 15.5" preserveAspectRatio="none"><path d="M1.1 14.6 V2 A1.3 1.3 0 0 1 2.4 0.7 H7.5 L9.3 2.6 H14.4 A1.3 1.3 0 0 1 15.7 3.9 V6.6" fill="none" stroke="#9ba6d8" stroke-width="1.9" stroke-linejoin="round"/><path d="M4.4 6.6 H20 L16 15.4 H0.6 Z" fill="#9ba6d8"/></svg>
<div class="a" style="left:104.5px;top:622.3px;font-size:14px;line-height:20px;color:#a3afe2;font-weight:normal;letter-spacing:0px">리소스</div>
<svg class="a" style="left:62px;top:665.5px" width="10.5" height="6.5" viewBox="0 0 10.5 6.5"><path d="M1 5.5 L5.25 1.2 L9.5 5.5" fill="none" stroke="#ffffff" stroke-width="1.9"/></svg>
<svg class="a" style="left:81.5px;top:662.3px" width="16.5" height="12.5" viewBox="0 0 20 15.5" preserveAspectRatio="none"><path d="M1.1 14.6 V2 A1.3 1.3 0 0 1 2.4 0.7 H7.5 L9.3 2.6 H14.4 A1.3 1.3 0 0 1 15.7 3.9 V6.6" fill="none" stroke="#ffffff" stroke-width="1.9" stroke-linejoin="round"/><path d="M4.4 6.6 H20 L16 15.4 H0.6 Z" fill="#ffffff"/></svg>
<div class="a" style="left:104.5px;top:657.5px;font-size:14px;line-height:20px;color:#ffffff;font-weight:normal;letter-spacing:0px">디스크</div>
<svg class="a" style="left:85px;top:698.8px" width="10.5" height="6.5" viewBox="0 0 10.5 6.5"><path d="M1 5.5 L5.25 1.2 L9.5 5.5" fill="none" stroke="#ffffff" stroke-width="1.9"/></svg>
<svg class="a" style="left:105.5px;top:695.5px" width="15.5" height="12.5" viewBox="0 0 16 13" preserveAspectRatio="none"><path fill="#ffffff" d="M2.4 0.3 H13.6 A2.1 2.1 0 0 1 15.7 2.4 V10.6 A2.1 2.1 0 0 1 13.6 12.7 H2.4 A2.1 2.1 0 0 1 0.3 10.6 V2.4 A2.1 2.1 0 0 1 2.4 0.3 Z M2.6 1.9 A0.7 0.7 0 0 0 1.9 2.6 V7.3 H14.1 V2.6 A0.7 0.7 0 0 0 13.4 1.9 Z M1.9 8.9 V10.4 A0.7 0.7 0 0 0 2.6 11.1 H13.4 A0.7 0.7 0 0 0 14.1 10.4 V8.9 Z"/></svg>
<div class="a" style="left:113px;top:705.2px;width:1.6px;height:1.4px;background:#fff"></div><div class="a" style="left:115.8px;top:705.2px;width:1.6px;height:1.4px;background:#fff"></div>
<div class="a" style="left:126.5px;top:692.0px;font-size:15px;line-height:20px;color:#ffffff;font-weight:normal;letter-spacing:0px">/</div>
<svg class="a" style="left:109px;top:726.6px" width="16" height="14" viewBox="0 0 16 14" preserveAspectRatio="none"><path fill="#9ba6d8" d="M1.8 0.6 H14.2 A1.2 1.2 0 0 1 15.4 1.8 V12.2 A1.2 1.2 0 0 1 14.2 13.4 H1.8 A1.2 1.2 0 0 1 0.6 12.2 V1.8 A1.2 1.2 0 0 1 1.8 0.6Z M2.6 4 V11.4 H7.1 V4Z M8.9 4 V11.4 H13.4 V4Z"/></svg>
<div class="a" style="left:133.5px;top:723.6px;font-size:14px;line-height:20px;color:#a3afe2;font-weight:normal;letter-spacing:0px">사용량</div>
<svg class="a" style="left:109px;top:762.0px" width="16" height="14" viewBox="0 0 16 14" preserveAspectRatio="none"><path fill="#ffffff" d="M0.4 0.6 H3.2 V3.2 H0.4Z M0.4 5.7 H3.2 V8.3 H0.4Z M0.4 10.8 H3.2 V13.4 H0.4Z M4.8 0.9 H15.6 V2.9 H4.8Z M4.8 6 H15.6 V8 H4.8Z M4.8 11.1 H15.6 V13.1 H4.8Z"/></svg>
<div class="a" style="left:133.5px;top:759.0px;font-size:14px;line-height:20px;color:#ffffff;font-weight:normal;letter-spacing:0px">I/O 횟수</div>
<svg class="a" style="left:111px;top:796.0px" width="10" height="16" viewBox="0 0 10 16" preserveAspectRatio="none"><path fill="#9ba6d8" d="M2 0.4 H8 A1.6 1.6 0 0 1 9.6 2 V14 A1.6 1.6 0 0 1 8 15.6 H2 A1.6 1.6 0 0 1 0.4 14 V2 A1.6 1.6 0 0 1 2 0.4Z M2.2 2.2 V11.6 H7.8 V2.2Z M5 12.6 A0.9 0.9 0 1 0 5 14.4 A0.9 0.9 0 1 0 5 12.6Z"/></svg>
<div class="a" style="left:133.5px;top:794.0px;font-size:14px;line-height:20px;color:#a3afe2;font-weight:normal;letter-spacing:0px">I/O 사용량</div>
<svg class="a" style="left:109px;top:831.6px" width="16" height="14" viewBox="0 0 16 14" preserveAspectRatio="none"><path fill="#9ba6d8" d="M15.6 0.4 C13.4 1.8 8.6 1 5.2 3.6 C2.4 5.8 2.6 8.8 3.4 10.4 C5.6 7.6 8.4 6 11.2 5.2 C8.2 6.6 4.6 9 1.2 13.6 L2.4 14 C3.4 12.8 4 12.2 4.4 11.8 C7 13 10.4 12.6 12.6 10.2 C15.4 7.2 15.2 3.2 15.6 0.4Z"/></svg>
<div class="a" style="left:133.5px;top:828.6px;font-size:14px;line-height:20px;color:#a3afe2;font-weight:normal;letter-spacing:0px">평균서비스시간</div>
<svg class="a" style="left:109px;top:866.1px" width="15" height="15" viewBox="0 0 16 16" preserveAspectRatio="none"><path fill="#9ba6d8" d="M8.6 0.6 L15.2 7.2 L13.2 9.2 L11.8 7.8 L9.4 10.2 L10.6 11.4 L9.2 12.8 L3.4 7 L4.8 5.6 L6 6.8 L8.4 4.4 L6.8 2.8Z M7 9.2 L8.2 10.4 L2.6 15.6 C2 16.2 0.8 15.2 0.2 14.4 C-0.2 14 0 13.4 0.6 12.8Z"/></svg>
<div class="a" style="left:133.5px;top:863.6px;font-size:14px;line-height:20px;color:#a3afe2;font-weight:normal;letter-spacing:0px">평균 대기수</div>
<svg class="a" style="left:109px;top:901.6px" width="14" height="14" viewBox="0 0 16 16" preserveAspectRatio="none"><path fill="#9ba6d8" d="M15.4 0.6 L8.6 15.4 C8.3 16 7.4 15.9 7.3 15.2 L7 9 L0.8 8.7 C0.1 8.6 0 7.7 0.6 7.4Z"/></svg>
<div class="a" style="left:133.5px;top:898.6px;font-size:14px;line-height:20px;color:#a3afe2;font-weight:normal;letter-spacing:0px">파일노드수</div>
<svg class="a" style="left:85px;top:943.2px" width="10.5" height="6.5" viewBox="0 0 10.5 6.5"><path d="M1 1 L5.25 5.3 L9.5 1" fill="none" stroke="#a3afe2" stroke-width="1.9"/></svg>
<svg class="a" style="left:105.5px;top:940.0px" width="15.5" height="12.5" viewBox="0 0 16 13" preserveAspectRatio="none"><path fill="#9ba6d8" d="M2.4 0.3 H13.6 A2.1 2.1 0 0 1 15.7 2.4 V10.6 A2.1 2.1 0 0 1 13.6 12.7 H2.4 A2.1 2.1 0 0 1 0.3 10.6 V2.4 A2.1 2.1 0 0 1 2.4 0.3 Z M2.6 1.9 A0.7 0.7 0 0 0 1.9 2.6 V7.3 H14.1 V2.6 A0.7 0.7 0 0 0 13.4 1.9 Z M1.9 8.9 V10.4 A0.7 0.7 0 0 0 2.6 11.1 H13.4 A0.7 0.7 0 0 0 14.1 10.4 V8.9 Z"/></svg>
<div class="a" style="left:113px;top:949.7px;width:1.6px;height:1.4px;background:#9ba6d8"></div><div class="a" style="left:115.8px;top:949.7px;width:1.6px;height:1.4px;background:#9ba6d8"></div>
<div class="a" style="left:126.5px;top:936.5px;font-size:15px;line-height:20px;color:#a3afe2;font-weight:normal;letter-spacing:0px">/svc</div>
<svg class="a" style="left:85px;top:978.2px" width="10.5" height="6.5" viewBox="0 0 10.5 6.5"><path d="M1 1 L5.25 5.3 L9.5 1" fill="none" stroke="#a3afe2" stroke-width="1.9"/></svg>
<svg class="a" style="left:105.5px;top:975.0px" width="15.5" height="12.5" viewBox="0 0 16 13" preserveAspectRatio="none"><path fill="#9ba6d8" d="M2.4 0.3 H13.6 A2.1 2.1 0 0 1 15.7 2.4 V10.6 A2.1 2.1 0 0 1 13.6 12.7 H2.4 A2.1 2.1 0 0 1 0.3 10.6 V2.4 A2.1 2.1 0 0 1 2.4 0.3 Z M2.6 1.9 A0.7 0.7 0 0 0 1.9 2.6 V7.3 H14.1 V2.6 A0.7 0.7 0 0 0 13.4 1.9 Z M1.9 8.9 V10.4 A0.7 0.7 0 0 0 2.6 11.1 H13.4 A0.7 0.7 0 0 0 14.1 10.4 V8.9 Z"/></svg>
<div class="a" style="left:113px;top:984.7px;width:1.6px;height:1.4px;background:#9ba6d8"></div><div class="a" style="left:115.8px;top:984.7px;width:1.6px;height:1.4px;background:#9ba6d8"></div>
<div class="a" style="left:126.5px;top:971.5px;font-size:15px;line-height:20px;color:#a3afe2;font-weight:normal;letter-spacing:0px">/boot</div>
<svg class="a" style="left:62px;top:1014.5px" width="10.5" height="6.5" viewBox="0 0 10.5 6.5"><path d="M1 5.5 L5.25 1.2 L9.5 5.5" fill="none" stroke="#ffffff" stroke-width="1.9"/></svg>
<svg class="a" style="left:81.5px;top:1011.3px" width="16.5" height="12.5" viewBox="0 0 20 15.5" preserveAspectRatio="none"><path d="M1.1 14.6 V2 A1.3 1.3 0 0 1 2.4 0.7 H7.5 L9.3 2.6 H14.4 A1.3 1.3 0 0 1 15.7 3.9 V6.6" fill="none" stroke="#ffffff" stroke-width="1.9" stroke-linejoin="round"/><path d="M4.4 6.6 H20 L16 15.4 H0.6 Z" fill="#ffffff"/></svg>
<div class="a" style="left:104.5px;top:1007.5px;font-size:14px;line-height:20px;color:#ffffff;font-weight:normal;letter-spacing:0px">네트워크</div>
<svg class="a" style="left:63px;top:1046px" width="15" height="15" viewBox="0 0 16 16" preserveAspectRatio="none"><path fill="#9ba6d8" d="M6.8 0.4 H12.6 A2.4 2.4 0 0 1 15 2.8 V8.4 A2.4 2.4 0 0 1 12.6 10.8 H6.8 A2.4 2.4 0 0 1 4.4 8.4 V2.8 A2.4 2.4 0 0 1 6.8 0.4 Z M3.2 4.4 V6 H3 A1 1 0 0 0 2 7 V13 A1 1 0 0 0 3 14 H9 A1 1 0 0 0 10 13 V12.4 H11.6 V13.2 A2.6 2.6 0 0 1 9 15.8 H3 A2.6 2.6 0 0 1 0.4 13.2 V7 A2.6 2.6 0 0 1 3 4.4 Z"/></svg>
<div class="a" style="left:89px;top:1042.6px;font-size:14px;line-height:20px;color:#a3afe2;font-weight:normal;letter-spacing:0px">네트워크 상태 분석</div>
<svg class="a" style="left:350px;top:72px" width="16" height="15" viewBox="0 0 16 15"><path d="M12.6 4.4 A5.6 5.6 0 1 0 13.4 9.6" fill="none" stroke="#fff" stroke-width="2.3"/><path d="M9.4 5.6 L14.8 5.6 L14.8 0.6 Z" fill="#fff"/></svg>
<div class="a" style="left:378.5px;top:70px;font-size:12.6px;line-height:20px;color:#bfc3d9;font-weight:normal;letter-spacing:0px;">홈</div>
<div class="a" style="left:396px;top:70px;font-size:13px;line-height:20px;color:#bfc3d9;font-weight:normal;letter-spacing:0px;">/</div>
<div class="a" style="left:409.6px;top:70px;font-size:12.6px;line-height:20px;color:#bfc3d9;font-weight:normal;letter-spacing:0px;">시스템</div>
<div class="a" style="left:453.9px;top:70px;font-size:13px;line-height:20px;color:#bfc3d9;font-weight:normal;letter-spacing:0px;">/</div>
<div class="a" style="left:466.4px;top:70px;font-size:13px;line-height:20px;color:#bfc3d9;font-weight:normal;letter-spacing:0px;">test-was1</div>
<div class="a" style="left:529.9px;top:70px;font-size:13px;line-height:20px;color:#bfc3d9;font-weight:normal;letter-spacing:0px;">/</div>
<div class="a" style="left:543.7px;top:70px;font-size:12.6px;line-height:20px;color:#bfc3d9;font-weight:normal;letter-spacing:0px;">디스크</div>
<div class="a" style="left:587.3px;top:70px;font-size:13px;line-height:20px;color:#bfc3d9;font-weight:normal;letter-spacing:0px;">/</div>
<div class="a" style="left:599.8px;top:70px;font-size:13px;line-height:20px;color:#bfc3d9;font-weight:normal;letter-spacing:0px;">/</div>
<div class="a" style="left:609.5px;top:70px;font-size:13px;line-height:20px;color:#bfc3d9;font-weight:normal;letter-spacing:0px;">/</div>
<div class="a" style="left:622.5px;top:70px;font-size:13px;line-height:20px;color:#ffffff;font-weight:normal;letter-spacing:0px;">I/O 횟수</div>
<svg class="a" style="left:686px;top:71px" width="19" height="17" viewBox="0 0 19 17"><rect x="0" y="0" width="19" height="17" rx="3" fill="#fff"/><rect x="3" y="3.4" width="5.6" height="3.6" fill="#0a0d26"/><rect x="10.4" y="3.4" width="5.6" height="3.6" fill="#0a0d26"/><rect x="3" y="9.6" width="5.6" height="3.6" fill="#0a0d26"/><rect x="10.4" y="9.6" width="5.6" height="3.6" fill="#0a0d26"/></svg>
<div class="a" style="left:710px;top:68px;width:58px;height:24px;border-radius:12px;background:#454545"></div>
<div class="a" style="left:731px;top:71px;font-size:12px;line-height:18px;color:#ffffff;font-weight:normal;letter-spacing:0px;">Name</div>
<div class="a" style="left:711.5px;top:70px;width:20px;height:20px;border-radius:50%;background:#f2f2f2"></div>
<svg class="a" style="left:716.5px;top:75px" width="10" height="10" viewBox="0 0 10 10"><path d="M2 2 L8 8 M8 2 L2 8" stroke="#c0304a" stroke-width="1.3"/></svg>
<div class="a" style="left:366px;top:115px;width:28px;height:18px;border-radius:3px;background:#2e84dd;color:#fff;font-weight:bold;font-size:13px;line-height:18px;text-align:center">11</div>
<div class="a" style="left:397.5px;top:119px;width:1px;height:13px;background:#2a2f48"></div>
<div class="a" style="left:402px;top:112px;width:59px;height:24px;border:1px solid #5b5e6c;border-radius:3px;background:transparent;color:#fff;font-size:13px;line-height:22px;text-align:center">mariadb</div>
<div class="a" style="left:466px;top:112px;width:59px;height:24px;border:1px solid #5b5e6c;border-radius:3px;background:transparent;color:#fff;font-size:13px;line-height:22px;text-align:center">master1</div>
<div class="a" style="left:530px;top:112px;width:59px;height:24px;border:1px solid #5b5e6c;border-radius:3px;background:transparent;color:#fff;font-size:13px;line-height:22px;text-align:center">master2</div>
<div class="a" style="left:594px;top:112px;width:59px;height:24px;border:1px solid #5b5e6c;border-radius:3px;background:transparent;color:#fff;font-size:13px;line-height:22px;text-align:center">master3</div>
<div class="a" style="left:657px;top:112px;width:67px;height:24px;border:1px solid #5b5e6c;border-radius:3px;background:#2c3352;color:#fff;font-size:13px;line-height:22px;text-align:center">test-was1</div>
<div class="a" style="left:728px;top:112px;width:67px;height:24px;border:1px solid #5b5e6c;border-radius:3px;background:transparent;color:#fff;font-size:13px;line-height:22px;text-align:center">test-was2</div>
<div class="a" style="left:799px;top:112px;width:74px;height:24px;border:1px solid #5b5e6c;border-radius:3px;background:transparent;color:#fff;font-size:13px;line-height:22px;text-align:center">test1-web2</div>
<div class="a" style="left:878px;top:112px;width:73px;height:24px;border:1px solid #5b5e6c;border-radius:3px;background:transparent;color:#fff;font-size:13px;line-height:22px;text-align:center">tomcat-api</div>
<div class="a" style="left:956px;top:112px;width:83px;height:24px;border:1px solid #5b5e6c;border-radius:3px;background:transparent;color:#fff;font-size:13px;line-height:22px;text-align:center">tomcat-front</div>
<div class="a" style="left:1044px;top:112px;width:58px;height:24px;border:1px solid #5b5e6c;border-radius:3px;background:transparent;color:#fff;font-size:13px;line-height:22px;text-align:center">worker1</div>
<div class="a" style="left:1108px;top:112px;width:58px;height:24px;border:1px solid #5b5e6c;border-radius:3px;background:transparent;color:#fff;font-size:13px;line-height:22px;text-align:center">worker2</div>
<div class="a" style="left:1876px;top:112px;width:26px;height:24px;border:1px solid #6a6d78;border-radius:4px"></div>
<svg class="a" style="left:1884px;top:121px" width="10" height="6" viewBox="0 0 10 6"><path d="M0 0 H10 L5 5.6 Z" fill="#fff"/></svg>
<div class="a" style="left:364px;top:168px;font-size:13px;line-height:18px;color:#a9b0d8;font-weight:normal;letter-spacing:0px;">Sys &gt; test-was1[192.168.23.193] &gt; / &gt;</div>
<div class="a" style="left:1681px;top:163px;width:77px;height:32px;border-radius:4px;background:#2c7fe0;color:#fff;font-size:13.5px;line-height:34px;text-align:center">Current</div>
<div class="a" style="left:1760px;top:163px;width:73px;height:32px;border-radius:4px;background:#1f2441;color:#8088b4;font-size:13.5px;line-height:34px;text-align:center">History</div>
<svg class="a" style="left:1840px;top:171px" width="17" height="17" viewBox="0 0 17 17"><path d="M6.5 2.6 H3 A1.8 1.8 0 0 0 1.2 4.4 V14 A1.8 1.8 0 0 0 3 15.8 H12.6 A1.8 1.8 0 0 0 14.4 14 V10.4" fill="none" stroke="#a9a9ae" stroke-width="2"/><path d="M7 10 L15 2" stroke="#a9a9ae" stroke-width="2"/><path d="M9.6 0.8 H16.2 V7.4 Z" fill="#a9a9ae"/></svg>
<svg class="a" style="left:1872px;top:171.5px" width="15" height="15" viewBox="0 0 16 16"><path d="M9.2 0.2 H15.8 V6.8 Z M0.2 9.2 V15.8 H6.8 Z" fill="#fff"/><path d="M13.4 2.6 L9.2 6.8 M2.6 13.4 L6.8 9.2" stroke="#fff" stroke-width="2.4"/></svg>
<div class="a" style="left:1866px;top:211px;width:25px;height:23px;border-radius:3px;background:#575757"></div>
<div class="a" style="left:1870.5px;top:216.4px;width:16.5px;height:2.6px;border-radius:1.3px;background:#e6e6e6"></div>
<div class="a" style="left:1870.5px;top:221.2px;width:16.5px;height:2.6px;border-radius:1.3px;background:#e6e6e6"></div>
<div class="a" style="left:1870.5px;top:226px;width:16.5px;height:2.6px;border-radius:1.3px;background:#e6e6e6"></div>
<div class="a" style="left:1086px;top:206px;font-size:19px;line-height:24px;color:#ffffff;font-weight:normal;letter-spacing:1.3px;">I/O 횟수</div>
<div class="a" style="left:968.5px;top:242px;font-size:12px;line-height:18px;color:#7a84bf;font-weight:normal;letter-spacing:0.25px;">차트에 표시되는 값이 높을수록 I/O 횟수가 많은 것입니다.</div>
<div class="a" style="left:1027px;top:997px;width:16px;height:12px;background:#22c43a"></div>
<div class="a" style="left:1048px;top:995px;font-size:13px;line-height:18px;color:#dfe3f0;font-weight:bold;letter-spacing:-0.45px;">Disk Reads</div>
<div class="a" style="left:1134px;top:997px;width:16px;height:12px;background:#f5862e"></div>
<div class="a" style="left:1155px;top:995px;font-size:13px;line-height:18px;color:#dfe3f0;font-weight:bold;letter-spacing:-0.45px;">Disk Writes</div>
<div class="a" style="left:1802px;top:994px;width:13px;height:13px;border-radius:2px;background:#1878f0"></div>
<svg class="a" style="left:1802px;top:994px" width="13" height="13" viewBox="0 0 13 13"><path d="M2.8 6.6 L5.3 9.2 L10.3 3.6" fill="none" stroke="#fff" stroke-width="2.1"/></svg>
<div class="a" style="left:1822px;top:991px;font-size:13px;line-height:18px;color:#ffffff;font-weight:normal;letter-spacing:0px;">Show All</div>
<div class="a" style="left:501px;top:492px;width:151px;height:65px;border:1px solid #2bc43e;border-radius:3px;background:rgba(0,0,0,0.85)"></div>
<div class="a" style="left:509px;top:500px;font-size:13.5px;line-height:16px;color:#f2f2f2;font-weight:bold;letter-spacing:0.35px;">2024-07-03 10:40:00</div>
<div class="a" style="left:509.8px;top:519.5px;width:7px;height:7px;border-radius:50%;background:#2bc43e"></div>
<div class="a" style="left:518.5px;top:515px;font-size:13px;line-height:16px;color:#f2f2f2;font-weight:normal;letter-spacing:0px;">Disk Reads: <b>0.00</b></div>
<div class="a" style="left:509.8px;top:534.5px;width:7px;height:7px;border-radius:50%;background:#f5862e"></div>
<div class="a" style="left:518.5px;top:530px;font-size:13px;line-height:16px;color:#f2f2f2;font-weight:normal;letter-spacing:0px;">Disk Writes: <b>6.99</b></div>
<div class="a" style="left:330px;top:1060px;width:1590px;height:1px;background:#2a3256"></div>
<div class="a" style="left:1919px;top:1060px;width:1px;height:19px;background:#2a3256"></div>
<div class="a" style="left:340px;top:1064px;font-size:10px;line-height:14px;color:#e6e6ee;font-weight:normal;letter-spacing:-0.42px;">OPENMARU, Inc. &copy; 2016, All Rights Reserved.&nbsp; Version : 5.1.0, Build : 9f957, Time : 2024-06-26 16:39:14 &nbsp;<span style="display:inline-block;width:1px;height:13px;background:#e6e6ee;vertical-align:-2px"></span>&nbsp; [User Guide] [Quick Service]</div>
</body></html>
